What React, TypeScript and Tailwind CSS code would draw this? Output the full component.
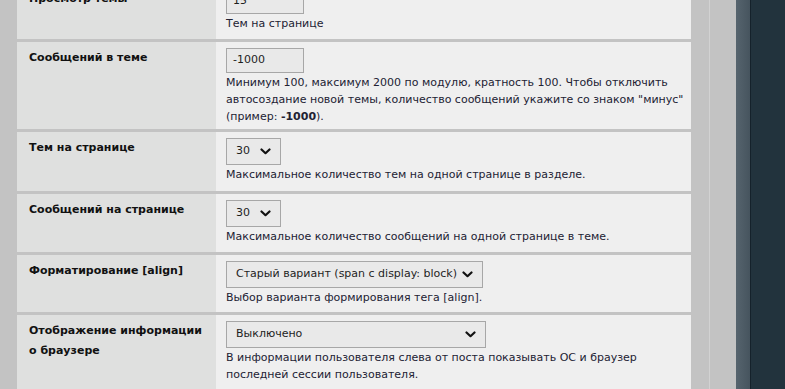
import React from "react";

const Chevron = () => (
  <svg width="11" height="7" viewBox="0 0 11 7" className="shrink-0">
    <polyline points="1.5,1.5 5.5,5.2 9.5,1.5" fill="none" stroke="#111" strokeWidth="2.2" strokeLinecap="round" strokeLinejoin="round" />
  </svg>
);

const Select = ({ value, w }: { value: string; w: string }) => (
  <div className={`${w} h-[27px] border border-[#a7a7a7] bg-[#e9e9e9] flex items-center justify-between pl-[9px] pr-[9px] text-[11px] text-[#1e1e1e]`}>
    <span className="whitespace-nowrap">{value}</span>
    <Chevron />
  </div>
);

const Input = ({ value }: { value: string }) => (
  <div className="w-[78px] h-[25px] border border-[#a7a7a7] bg-[#e9e9e9] flex items-center pl-[6px] text-[11px] text-[#1e1e1e]">
    {value}
  </div>
);

const Row = ({
  h,
  label,
  children,
}: {
  h: string;
  label: React.ReactNode;
  children: React.ReactNode;
}) => (
  <div className={`flex shrink-0 ${h}`}>
    <div className="w-[199px] shrink-0 bg-[#dfe0df] pl-[12px] pt-[6px] text-[11px] leading-[20px] font-bold text-[#111]">
      {label}
    </div>
    <div className="flex-1 bg-[#efefef] pl-[10px] pt-[6px]">{children}</div>
  </div>
);

const Desc = ({ children, mt }: { children: React.ReactNode; mt: string }) => (
  <div className={`${mt} text-[11px] leading-[17px] text-[#222233] whitespace-nowrap`}>{children}</div>
);

export default function App() {
  return (
    <div
      className="w-[785px] h-[389px] overflow-hidden flex bg-[#c3c3c3]"
      style={{ fontFamily: '"DejaVu Sans", Verdana, sans-serif' }}
    >
      <div className="w-[17px] shrink-0 bg-[#c3c3c3]" />
      <div className="w-[674px] shrink-0 flex flex-col gap-[3px] mt-[-17px]">
        <Row h="h-[56px]" label="Просмотр темы">
          <Input value="15" />
          <Desc mt="mt-[1px]">Тем на странице</Desc>
        </Row>
        <Row h="h-[87px]" label="Сообщений в теме">
          <Input value="-1000" />
          <Desc mt="mt-[1px]">
            Минимум 100, максимум 2000 по модулю, кратность 100. Чтобы отключить
            <br />
            автосоздание новой темы, количество сообщений укажите со знаком "минус"
            <br />
            (пример: <b>-1000</b>).
          </Desc>
        </Row>
        <Row h="h-[59px]" label="Тем на странице">
          <Select value="30" w="w-[55px]" />
          <Desc mt="mt-[1px]">Максимальное количество тем на одной странице в разделе.</Desc>
        </Row>
        <Row h="h-[58px]" label="Сообщений на странице">
          <Select value="30" w="w-[55px]" />
          <Desc mt="mt-[1px]">Максимальное количество сообщений на одной странице в теме.</Desc>
        </Row>
        <Row h="h-[57px]" label="Форматирование [align]">
          <Select value="Старый вариант (span c display: block)" w="w-[257px]" />
          <Desc mt="mt-[1px]">Выбор варианта формирования тега [align].</Desc>
        </Row>
        <Row
          h="h-[90px]"
          label={
            <>
              Отображение информации
              <br />о браузере
            </>
          }
        >
          <Select value="Выключено" w="w-[260px]" />
          <Desc mt="mt-[1px]">
            В информации пользователя слева от поста показывать ОС и браузер
            <br />
            последней сессии пользователя.
          </Desc>
        </Row>
      </div>
      <div className="w-[18px] shrink-0 bg-[#c3c3c3]" />
      <div className="w-px shrink-0 bg-[#d2d2d2]" />
      <div className="w-[26px] shrink-0 bg-[#c3c3c3]" />
      <div className="w-[14px] shrink-0 bg-gradient-to-r from-[#56646e] to-[#46545e]" />
      <div className="w-px shrink-0 bg-[#15222b]" />
      <div className="flex-1 bg-[#22333d]" />
    </div>
  );
}
